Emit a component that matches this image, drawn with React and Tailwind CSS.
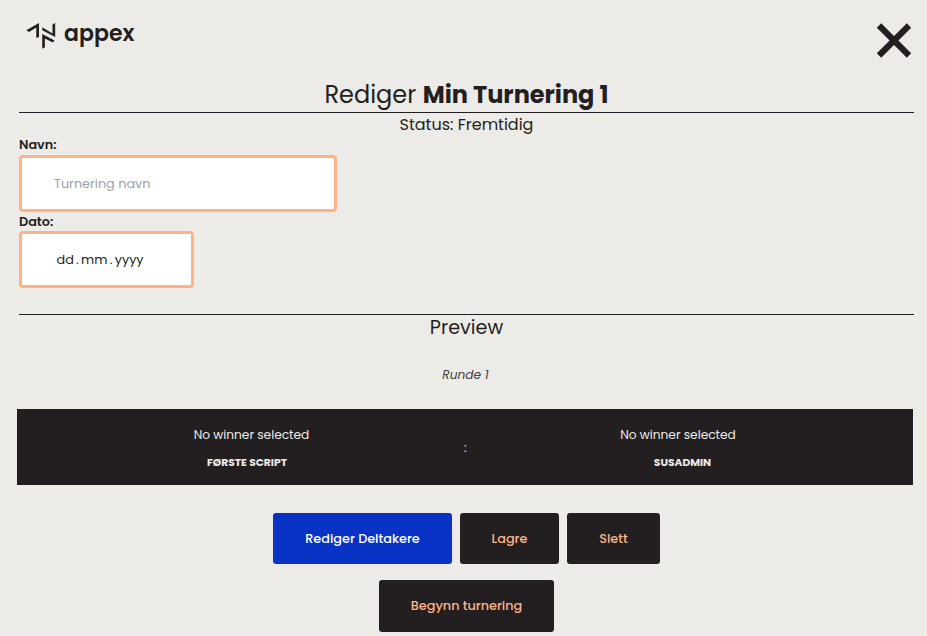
import React from "react";

function Logo() {
  return (
    <div className="flex h-[28px] items-start">
      <svg className="mt-[1px] h-[27px] w-[31px] shrink-0" viewBox="0 0 31 27" fill="#231f20">
        <path d="M0.3 8.2 L13 1 V15 L10.3 16 V5.6 L3 10 Z" />
        <path d="M16.3 5.2 L26.5 11.4 V2.4 L29.2 1 V15 L16.3 8.2 Z" />
        <path d="M16.2 12.1 L28.6 18.6 L26.8 20.6 L18.9 16.4 V25.2 L16.2 26.8 Z" />
      </svg>
      <span className="mt-[1px] ml-[7px] text-[22px] leading-[24px] font-semibold tracking-[0.05px]">appex</span>
    </div>
  );
}

function Player({ name, className, nameClassName }) {
  return (
    <div className={"flex flex-col items-center text-[#edebe7] " + className}>
      <p className="h-[28px] text-[12.2px] leading-[20px]">No winner selected</p>
      <p className={"text-[10.7px] leading-[20px] font-bold " + nameClassName}>{name}</p>
    </div>
  );
}

function Button({ children, className }) {
  return (
    <button className={"flex items-center justify-center rounded-[3px] text-[12.8px] font-medium whitespace-nowrap " + className}>
      {children}
    </button>
  );
}

export default function App() {
  return (
    <main className="flex h-[636px] w-full flex-col overflow-hidden bg-[#edebe7] pr-[13px] pl-[19px] font-['Poppins','Inter',sans-serif] text-[#231f20]">
      <header className="flex h-[77px] shrink-0 items-start justify-between pt-[21px] pr-[2px] pl-[7px]">
        <Logo />
        <button aria-label="Lukk" className="mt-[1px]">
          <svg className="h-[37px] w-[36px]" viewBox="0 0 36 37" stroke="#231f20" strokeWidth="6.2">
            <path d="M3 3.5 L33 33.5 M33 3.5 L3 33.5" />
          </svg>
        </button>
      </header>
      <h1 className="flex h-[35px] shrink-0 items-center justify-center gap-[6.5px] text-[24px] whitespace-nowrap">
        <span>Rediger</span>
        <strong className="font-bold">Min Turnering 1</strong>
      </h1>
      <p className="h-[25px] shrink-0 border-t border-[#231f20] text-center text-[16px] leading-[23px]">Status: Fremtidig</p>
      <label className="h-[18px] shrink-0 text-[12.8px] leading-[15px] font-semibold">Navn:</label>
      <input
        className="h-[57px] w-[318px] shrink-0 rounded-[4px] border-[3px] border-[#fdb386] bg-white px-[32px] text-[12.8px] outline-none placeholder:text-[#9ca3af]"
        placeholder="Turnering navn"
      />
      <label className="h-[19px] shrink-0 text-[12.8px] leading-[19px] font-semibold">Dato:</label>
      <div className="flex h-[57px] w-[175px] shrink-0 items-center gap-[2.3px] rounded-[4px] border-[3px] border-[#fdb386] bg-white pl-[34.5px] text-[12.8px]">
        <span>dd</span><span>.</span><span>mm</span><span>.</span><span>yyyy</span>
      </div>
      <h2 className="mt-[26px] h-[48px] shrink-0 border-t border-[#231f20] text-center text-[19.2px] leading-[25px]">Preview</h2>
      <p className="h-[47px] shrink-0 pr-[2px] text-center text-[12.2px] leading-[25px] text-[#454142] italic">Runde 1</p>
      <section className="-ml-[2px] flex h-[76px] w-[896px] shrink-0 bg-[#231f20] pt-[16px]">
        <Player name="FØRSTE SCRIPT" className="w-[447px] pl-[22px]" nameClassName="pr-[9px]" />
        <span className="w-[3px] pt-[13px] text-[12px] leading-[20px] text-[#edebe7]">:</span>
        <Player name="SUSADMIN" className="w-[446px] pr-[24px]" nameClassName="pl-[9px]" />
      </section>
      <div className="mt-[28px] flex h-[51px] shrink-0 justify-center gap-2">
        <Button className="w-[179px] bg-[#0833c5] text-white">Rediger Deltakere</Button>
        <Button className="w-[99px] bg-[#231f20] text-[#fdb386]">Lagre</Button>
        <Button className="w-[93px] bg-[#231f20] text-[#fdb386]">Slett</Button>
      </div>
      <div className="mt-4 flex h-[52px] shrink-0 justify-center">
        <Button className="w-[175px] bg-[#231f20] text-[#fdb386]">Begynn turnering</Button>
      </div>
    </main>
  );
}
